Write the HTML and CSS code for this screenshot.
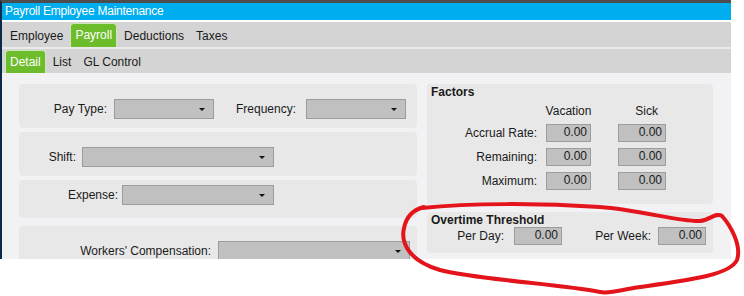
FILE: index.html
```html
<!DOCTYPE html>
<html lang="en">
<head>
  <meta charset="UTF-8" />
  <title>Payroll Employee Maintenance</title>
  <link rel="stylesheet" href="styles.css">
</head>
<body>
  <div class="window">
    <div class="titlebar">Payroll Employee Maintenance</div>

    <nav class="tabs main-tabs">
      <span class="tab">Employee</span>
      <span class="tab active">Payroll</span>
      <span class="tab">Deductions</span>
      <span class="tab">Taxes</span>
    </nav>
    <nav class="tabs sub-tabs">
      <span class="tab active">Detail</span>
      <span class="tab">List</span>
      <span class="tab">GL Control</span>
    </nav>

    <main class="content">
      <section class="left-col">
        <div class="panel field-row">
          <label class="lbl lbl-paytype">Pay Type:</label>
          <div class="select sel-short"></div>
          <label class="lbl lbl-freq">Frequency:</label>
          <div class="select sel-short"></div>
        </div>
        <div class="panel field-row">
          <label class="lbl lbl-shift">Shift:</label>
          <div class="select sel-long"></div>
        </div>
        <div class="panel field-row expense">
          <label class="lbl lbl-expense">Expense:</label>
          <div class="select sel-mid"></div>
        </div>
        <div class="panel field-row workers">
          <label class="lbl lbl-workers">Workers' Compensation:</label>
          <div class="select sel-long"></div>
        </div>
      </section>

      <section class="right-col">
        <div class="panel factors">
          <div class="panel-title">Factors</div>
          <div class="factor-grid">
            <span></span>
            <span class="col-head">Vacation</span>
            <span class="col-head sick-head">Sick</span>

            <span class="lbl">Accrual Rate:</span>
            <span class="num">0.00</span>
            <span class="num wide">0.00</span>

            <span class="lbl">Remaining:</span>
            <span class="num">0.00</span>
            <span class="num wide">0.00</span>

            <span class="lbl">Maximum:</span>
            <span class="num">0.00</span>
            <span class="num wide">0.00</span>
          </div>
        </div>

        <div class="panel overtime">
          <div class="panel-title">Overtime Threshold</div>
          <div class="ot-row">
            <span class="lbl lbl-perday">Per Day:</span>
            <span class="num wide">0.00</span>
            <span class="lbl lbl-perweek">Per Week:</span>
            <span class="num wide">0.00</span>
          </div>
        </div>
      </section>
    </main>
  </div>

  <!-- hand drawn markup around the overtime box -->
  <svg class="markup" width="744" height="296" viewBox="0 0 744 296">
    <path d="M 422 208 C 470 203, 540 203, 600 207 C 640 210, 680 222, 700 221 C 710 220, 716 212, 722 216 C 730 225, 742 245, 737 260 C 730 275, 690 280, 640 287 C 620 290, 610 294, 600 292 C 560 284, 480 280, 440 270 C 412 262, 400 245, 404 228 C 406 218, 412 210, 424 207" />
  </svg>
</body>
</html>
```

FILE: styles.css
```css
html, body {
  height: 296px;
}

body {
  margin: 0;
  background: #fff;
  font-family: "Liberation Sans", Arial, sans-serif;
  font-size: 12px;
  color: #1a1a1a;
  position: relative;
  overflow: hidden;
}

.window {
  width: 729px;
  height: 256px;
  border-top: 3px solid #4d4d4d;
  border-left: 2px solid #0b2a48;
  overflow: hidden;
}

.titlebar {
  height: 17px;
  line-height: 17px;
  padding-left: 3px;
  background: #00adef;
  color: #fff;
  letter-spacing: -0.25px;
  border-bottom: 2px solid #fff;
}

/* tab strips */
.tabs {
  display: flex;
  background: #d4d4d4;
  padding-left: 3px;
}

.main-tabs {
  height: 25px;
  border-bottom: 2px solid #ebebeb;
}

.sub-tabs {
  height: 24px;
}

.tab {
  margin-top: 1px;
  margin-right: 2px;
  padding: 1px 5px 0;
  line-height: 24px;
}

.sub-tabs .tab {
  line-height: 23px;
}

.tab.active {
  background: #6cbc2b;
  color: #fff;
  border: 1px solid #cde7b6;
  border-bottom: none;
  border-radius: 4px 4px 0 0;
  padding: 0 4px;
  line-height: 22px;
}

.sub-tabs .tab.active {
  line-height: 22px;
}

/* body */
.content {
  display: flex;
  gap: 10px;
  height: 186px;
  padding: 11px 18px 0 17px;
  background: #f2f2f4;
}

.left-col {
  width: 398px;
  display: flex;
  flex-direction: column;
  gap: 4px;
}

.right-col {
  width: 286px;
  display: flex;
  flex-direction: column;
  gap: 8px;
}

.panel {
  background: #e8e8e8;
  border-radius: 4px;
}

.field-row {
  display: flex;
  align-items: center;
  padding: 15px 0 9px;
}

.field-row.expense {
  padding: 5px 0 13px;
}

.field-row.workers {
  margin-top: 4px;
  padding-top: 15px;
  height: 60px;
  align-items: flex-start;
}

.field-row .lbl {
  text-align: right;
  flex: none;
}

.lbl-paytype { width: 88px; margin-right: 7px; }
.lbl-freq { width: 82px; margin-right: 10px; }
.lbl-shift { width: 57px; margin-right: 6px; }
.lbl-expense { width: 99px; margin-right: 4px; }
.lbl-workers { width: 192px; margin-right: 7px; line-height: 20px; }

.select {
  position: relative;
  height: 20px;
  box-sizing: border-box;
  background: #c0c0c0;
  border: 1px solid #9c9c9c;
  flex: none;
}

.select::after {
  content: "";
  position: absolute;
  right: 8px;
  top: 8px;
  border-left: 3px solid transparent;
  border-right: 3px solid transparent;
  border-top: 3px solid #111;
}

.sel-short { width: 100px; }
.sel-mid { width: 152px; }
.sel-long { width: 192px; }

/* right side boxes */
.panel-title {
  font-weight: bold;
  line-height: 14px;
}

.factors {
  padding: 1px 4px 14px;
}

.factor-grid {
  display: grid;
  grid-template-columns: 106px 45px 66px;
  grid-template-rows: 14px repeat(3, 18px);
  column-gap: 9px;
  row-gap: 6px;
  align-items: center;
  margin-top: 5px;
}

.factor-grid .lbl {
  justify-self: end;
}

.col-head {
  justify-self: center;
  line-height: 14px;
}

.sick-head {
  justify-self: end;
  margin-right: 8px;
}

.num {
  height: 18px;
  width: 45px;
  box-sizing: border-box;
  background: #c0c0c0;
  border: 1px solid #9c9c9c;
  text-align: right;
  padding-right: 3px;
  line-height: 14px;
}

.num.wide {
  width: 48px;
  justify-self: end;
}

.overtime {
  padding: 1px 4px 8px;
}

.ot-row {
  display: flex;
  align-items: center;
}

.ot-row .lbl {
  text-align: right;
}

.lbl-perday { width: 73px; margin-right: 10px; }
.lbl-perweek { width: 89px; margin-right: 7px; }

.markup {
  position: absolute;
  left: 0;
  top: 0;
  pointer-events: none;
}

.markup path {
  fill: none;
  stroke: #e3141c;
  stroke-width: 4;
  stroke-linecap: round;
  stroke-linejoin: round;
}
```
